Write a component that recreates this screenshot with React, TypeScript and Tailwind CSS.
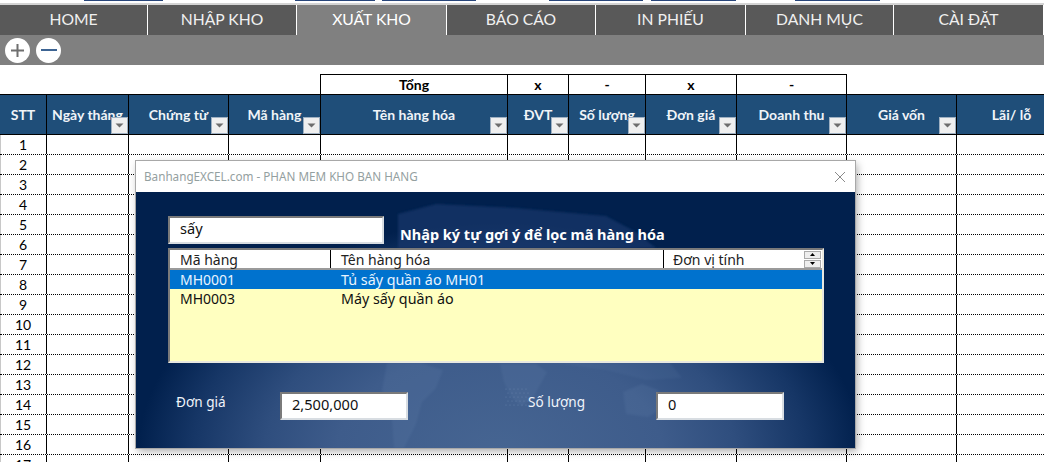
import React from "react";

const tabs = [
  { t: "HOME", w: "w-[148px]" },
  { t: "NHẬP KHO", w: "w-[149px]" },
  { t: "XUẤT KHO", w: "w-[150px]", active: true },
  { t: "BÁO CÁO", w: "w-[149px]" },
  { t: "IN PHIẾU", w: "w-[150px]" },
  { t: "DANH MỤC", w: "w-[148px]" },
  { t: "CÀI ĐẶT", w: "w-[150px]" },
];

const cols = [
  { t: "STT", w: "w-[47px]", f: false },
  { t: "Ngày tháng", w: "w-[82px]", f: true },
  { t: "Chứng từ", w: "w-[100px]", f: true },
  { t: "Mã hàng", w: "w-[92px]", f: true },
  { t: "Tên hàng hóa", w: "w-[187px]", f: true },
  { t: "ĐVT", w: "w-[61px]", f: true },
  { t: "Số lượng", w: "w-[77px]", f: true },
  { t: "Đơn giá", w: "w-[91px]", f: true },
  { t: "Doanh thu", w: "w-[110px]", f: true },
  { t: "Giá vốn", w: "w-[110px]", f: true },
  { t: "Lãi/ lỗ", w: "w-[110px]", f: false },
];

const dashes = [
  "ml-[84px] w-[79px]",
  "ml-[132px] w-[80px]",
  "ml-[7px] w-[94px]",
  "ml-[73px] w-[94px]",
  "ml-[8px] w-[85px]",
  "ml-[59px] w-[85px]",
];

const totals = [
  { t: "Tổng", w: "w-[187px]" },
  { t: "x", w: "w-[61px]" },
  { t: "-", w: "w-[77px]" },
  { t: "x", w: "w-[91px]" },
  { t: "-", w: "w-[110px]" },
];

function FilterButton() {
  return (
    <span className="absolute right-0 bottom-0 flex h-[17px] w-[17px] items-center justify-center border border-[#9eb0c2] bg-[#efefef]">
      <svg width="9" height="5" viewBox="0 0 9 5">
        <path d="M0.5 0.5h8L4.5 4.5z" fill="#6d6d6d" />
      </svg>
    </span>
  );
}

function Field({ value, width }: { value: string; width: string }) {
  return (
    <div
      className={`${width} h-[28px] flex items-center bg-white border-2 border-t-[#7a7a7a] border-l-[#7a7a7a] border-r-[#d8dde2] border-b-[#d8dde2] pl-[10px] pb-[2px] text-[14.6px] text-[#111]`}
    >
      {value}
    </div>
  );
}

function MapArt() {
  return (
    <svg className="absolute inset-0 h-full w-full" viewBox="0 0 719 256" preserveAspectRatio="none">
      <defs>
        <radialGradient
          id="bg"
          gradientUnits="userSpaceOnUse"
          cx="0"
          cy="0"
          r="1"
          gradientTransform="translate(364 262) scale(362 232)"
        >
          <stop offset="0" stopColor="#466592" />
          <stop offset="0.45" stopColor="#3e5c8b" />
          <stop offset="0.65" stopColor="#2f4e7e" />
          <stop offset="0.85" stopColor="#163666" />
          <stop offset="1" stopColor="#01204d" />
        </radialGradient>
        <filter id="soft">
          <feGaussianBlur stdDeviation="1" />
        </filter>
      </defs>
      <rect width="719" height="256" fill="#01204d" />
      <rect width="719" height="256" fill="url(#bg)" />
      <g filter="url(#soft)" fill="#6a88b2" opacity="0.16">
        <path d="M251 171 L285 171 L307 178 L300 196 L286 210 L280 232 L268 256 L258 256 L256 226 L246 198 Z" />
        <path d="M364 172 L400 172 L411 180 L398 204 L386 214 L376 206 L368 190 Z" />
        <path d="M487 200 L506 192 L522 198 L527 216 L512 225 L490 222 Z" />
        <path d="M420 171 L534 171 L546 186 L510 188 L470 178 Z" opacity="0.7" />
      </g>
      <g filter="url(#soft)" fill="#1a3b70" opacity="0.6">
        <path d="M262 22 L300 12 L380 16 L470 24 L500 40 L520 56 L262 56 Z" />
      </g>
      <g fill="#8aa4c8" opacity="0.4">
        {[0, 1, 2, 3, 4].flatMap((r) =>
          [0, 1, 2, 3, 4, 5].map((c) => (
            <circle key={`${r}-${c}`} cx={370 + c * 4 + (r % 2) * 2} cy={197 + r * 4} r="0.6" />
          ))
        )}
      </g>
    </svg>
  );
}

export default function App() {
  return (
    <div className="relative h-[462px] w-[1044px] overflow-hidden bg-white font-['Lato','Liberation_Sans',sans-serif] text-black">
      {/* clipped strip of the row above */}
      <div className="flex h-[5px] items-start border-b-2 border-[#d4d4d4]">
        {dashes.map((d, i) => (
          <span key={i} className={`${d} h-px bg-[#27457a]`} />
        ))}
      </div>

      {/* tabs */}
      <div className="flex h-[30px] bg-[#595959]">
        {tabs.map((tab) => (
          <div
            key={tab.t}
            className={`${tab.w} shrink-0 flex items-center justify-center border-r border-white text-[15.7px] ${
              tab.active ? "bg-[#808080] text-white" : "text-[#f0f0f0]"
            }`}
          >
            {tab.t}
          </div>
        ))}
      </div>

      {/* toolbar */}
      <div className="flex h-[30px] items-center gap-[6px] bg-[#808080] pl-[5px]">
        <span className="flex h-[25px] w-[25px] items-center justify-center rounded-full bg-white">
          <svg width="15" height="15" viewBox="0 0 15 15">
            <path d="M7.5 1v13M1 7.5h13" stroke="#6f6f6f" strokeWidth="2" />
          </svg>
        </span>
        <span className="flex h-[25px] w-[25px] items-center justify-center rounded-full bg-white">
          <svg width="16" height="4" viewBox="0 0 16 4">
            <path d="M0 2h16" stroke="#3d6493" strokeWidth="2" />
          </svg>
        </span>
      </div>

      {/* totals */}
      <div className="mt-[9px] flex h-[20px] pl-[320px] text-[14px] font-bold">
        <div className="flex border-t border-l border-r-0 border-black">
          {totals.map((c, i) => (
            <div key={i} className={`${c.w} flex items-center justify-center border-r border-black`}>
              {c.t}
            </div>
          ))}
        </div>
      </div>

      {/* table header */}
      <div className="flex h-[41px] w-[1100px] border-y border-black bg-[#1f4e79]">
        {cols.map((c) => (
          <div
            key={c.t}
            className={`${c.w} relative flex shrink-0 items-center justify-center whitespace-nowrap border-r border-black text-[14px] font-bold text-[#f0f4f8]`}
          >
            {c.t}
            {c.f && <FilterButton />}
          </div>
        ))}
      </div>

      {/* rows */}
      <div className="w-[1100px]">
        {Array.from({ length: 17 }, (_, i) => (
          <div key={i} className="flex h-[20px] border-b border-dotted border-black shadow-[inset_1px_0_0_#c8c8c8]">
            {cols.map((c, j) => (
              <div
                key={c.t}
                className={`${c.w} flex shrink-0 items-center justify-center border-r border-black text-[14px] leading-none`}
              >
                {j === 0 ? i + 1 : ""}
              </div>
            ))}
          </div>
        ))}
      </div>

      {/* dialog */}
      <div className="absolute left-[136px] top-[161px] flex h-[287px] w-[719px] flex-col font-['Noto_Sans','Liberation_Sans',sans-serif] shadow-[2px_3px_8px_rgba(0,0,0,0.35)] outline outline-1 outline-[#a8a8a8]">
        <div className="flex h-[31px] shrink-0 items-center justify-between bg-white pl-[8px] pr-[9px]">
          <span className="text-[11.7px] text-[#94a0a0]">BanhangEXCEL.com - PHAN MEM KHO BAN HANG</span>
          <svg width="12" height="12" viewBox="0 0 12 12">
            <path d="M1 1l10 10M11 1L1 11" stroke="#8a8a8a" strokeWidth="1" />
          </svg>
        </div>

        <div className="relative flex-1">
          <MapArt />
          <div className="relative flex flex-col pl-[32px] pt-[24px]">
            <div className="flex h-[28px] items-center">
              <Field value="sấy" width="w-[216px]" />
              <span className="ml-[16px] mt-[8px] whitespace-nowrap text-[14.5px] leading-[20px] font-bold text-white">
                Nhập ký tự gợi ý để lọc mã hàng hóa
              </span>
            </div>

            {/* list */}
            <div className="mt-[4px] flex h-[115px] w-[656px] flex-col border-2 border-t-[#7a7a7a] border-l-[#7a7a7a] border-r-[#e8e8e0] border-b-[#e8e8e0] bg-[#ffffc0] text-[14px] leading-[19px]">
              <div className="flex h-[20px] shrink-0 items-center border-b-2 border-[#9a9a9a] bg-white text-[#222]">
                <div className="h-full w-[161px] border-r border-black pl-[10px]">Mã hàng</div>
                <div className="h-full w-[333px] border-r border-black pl-[10px]">Tên hàng hóa</div>
                <div className="h-full flex-1 pl-[9px]">Đơn vị tính</div>
                <div className="mr-px flex flex-col gap-px">
                  <span className="flex h-[8px] w-[17px] items-center justify-center border border-[#aaa] bg-[#eee]">
                    <svg width="5" height="3" viewBox="0 0 5 3">
                      <path d="M2.5 0L5 3H0z" fill="#000" />
                    </svg>
                  </span>
                  <span className="flex h-[8px] w-[17px] items-center justify-center border border-[#aaa] bg-[#eee]">
                    <svg width="5" height="3" viewBox="0 0 5 3">
                      <path d="M0 0h5L2.5 3z" fill="#000" />
                    </svg>
                  </span>
                </div>
              </div>
              <div className="flex h-[19px] items-center bg-[#0072ce] text-[#e8f4ff]">
                <div className="w-[161px] pl-[10px]">MH0001</div>
                <div className="pl-[10px] text-[14.3px]">Tủ sấy quần áo MH01</div>
              </div>
              <div className="flex h-[18px] items-center text-[#111]">
                <div className="w-[161px] pl-[10px]">MH0003</div>
                <div className="pl-[10px] text-[14.3px]">Máy sấy quần áo</div>
              </div>
            </div>

            {/* fields */}
            <div className="mt-[29px] flex">
              <span className="ml-[8px] w-[104px] text-[13.6px] leading-[20px] text-[#f0f4fa]">Đơn giá</span>
              <Field value="2,500,000" width="w-[128px]" />
              <span className="ml-[120px] w-[128px] text-[13.6px] leading-[20px] text-[#f0f4fa]">Số lượng</span>
              <Field value="0" width="w-[128px]" />
            </div>
          </div>
        </div>
      </div>
    </div>
  );
}
